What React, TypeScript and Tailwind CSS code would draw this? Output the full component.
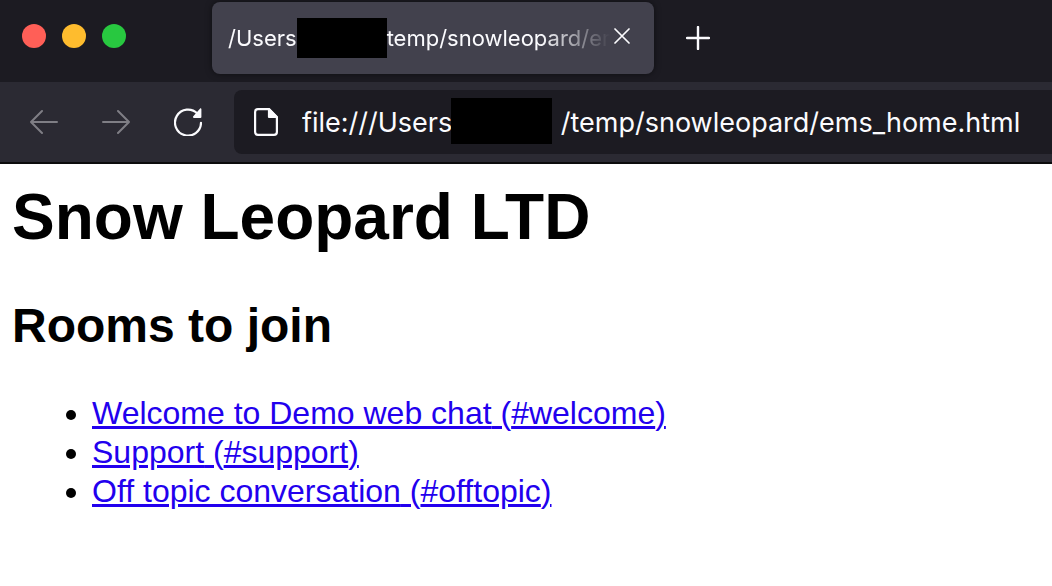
import React, { useState } from "react";

const rooms = [
  { name: "Welcome to Demo web chat", channel: "#welcome" },
  { name: "Support", channel: "#support" },
  { name: "Off topic conversation", channel: "#offtopic" },
];

const WindowButtons = () => (
  <div className="flex flex-row gap-4 pb-1">
    <button aria-label="Close window" className="w-6 h-6 rounded-full bg-[#ff5f57]" />
    <button aria-label="Minimize window" className="w-6 h-6 rounded-full bg-[#febc2e]" />
    <button aria-label="Zoom window" className="w-6 h-6 rounded-full bg-[#28c840]" />
  </div>
);

const Tab = () => (
  <div className="flex flex-row items-center w-[442px] h-[72px] pl-4 pr-5 rounded-lg bg-[#42414d] shadow-[0_0_6px_rgba(0,0,0,0.5)]">
    <div className="flex flex-row items-center flex-1 min-w-0 overflow-hidden text-[22px] leading-8 whitespace-nowrap [mask-image:linear-gradient(to_right,#000_82%,transparent)]">
      <span>/Users</span>
      <span className="w-[90px] h-10 shrink-0 bg-black" />
      <span>temp/snowleopard/ems_home.html</span>
    </div>
    <button aria-label="Close tab" className="flex items-center justify-center w-6 h-6 pb-1">
      <svg viewBox="0 0 16 16" className="w-4 h-4 shrink-0" fill="none" stroke="#fbfbfe" strokeWidth="1.7" strokeLinecap="round">
        <path d="M1 1l14 14M15 1L1 15" />
      </svg>
    </button>
  </div>
);

const TabBar = () => (
  <div className="flex flex-row items-center h-[82px] pl-[22px] pb-1.5 bg-[#1c1b22]">
    <WindowButtons />
    <div className="pl-[86px]">
      <Tab />
    </div>
    <button aria-label="New tab" className="ml-7 p-1">
      <svg viewBox="0 0 24 24" className="w-6 h-6" fill="none" stroke="#fbfbfe" strokeWidth="2.4" strokeLinecap="round">
        <path d="M12 1v22M1 12h22" />
      </svg>
    </button>
  </div>
);

const NavButtons = () => (
  <div className="flex flex-row gap-11">
    <button aria-label="Back" disabled>
      <svg viewBox="0 0 28 28" className="w-7 h-7" fill="none" stroke="#7f7e85" strokeWidth="2" strokeLinecap="round" strokeLinejoin="round">
        <path d="M27 14H1M12 3L1 14l11 11" />
      </svg>
    </button>
    <button aria-label="Forward" disabled>
      <svg viewBox="0 0 28 28" className="w-7 h-7" fill="none" stroke="#7f7e85" strokeWidth="2" strokeLinecap="round" strokeLinejoin="round">
        <path d="M1 14h26M16 3l11 11-11 11" />
      </svg>
    </button>
    <button aria-label="Reload">
      <svg viewBox="0 0 28 28" className="w-7 h-7" fill="none" stroke="#fbfbfe" strokeWidth="2.2" strokeLinecap="round">
        <path d="M27 14.8A13 13 0 1 1 23.4 5.6" />
        <path d="M27.4 1.2V9a1 1 0 0 1-1 1H20c-1 0-1.400-1-.7-1.700l6.600-7.600c.6-.6 1.500-.4 1.500.5z" fill="#fbfbfe" stroke="none" />
      </svg>
    </button>
  </div>
);

const AddressBar = () => {
  const [url, setUrl] = useState(
    "file:///Users/" + "\u00a0".repeat(13) + "/temp/snowleopard/ems_home.html"
  );
  return (
    <div className="flex flex-row items-center flex-1 min-w-0 h-16 pl-5 rounded-l-lg bg-[#1c1b22]">
      <svg viewBox="0 0 24 28" className="w-6 h-7 shrink-0" fill="none" stroke="#fbfbfe" strokeWidth="2.2" strokeLinejoin="round">
        <path d="M4 1.100h11l7.900 8V24a2.900 2.900 0 0 1-2.900 2.900H4A2.900 2.900 0 0 1 1.100 24V4A2.900 2.900 0 0 1 4 1.100z" />
        <path d="M15 1.200V9h7.500z" fill="#fbfbfe" />
      </svg>
      <div className="relative flex-1 min-w-0 ml-6">
        <input
          aria-label="Address"
          value={url}
          onChange={(e) => setUrl(e.target.value)}
          className="block w-full h-12 text-[27px] bg-transparent outline-none"
        />
        <div className="absolute top-0 left-[149px] w-[101px] h-[46px] bg-black" />
      </div>
    </div>
  );
};

const Toolbar = () => (
  <div className="flex flex-row items-center h-[82px] pl-[30px] border-b-2 border-[#0c0c0d] bg-[#2b2a33]">
    <NavButtons />
    <div className="flex flex-1 min-w-0 pl-8">
      <AddressBar />
    </div>
  </div>
);

const RoomList = () => (
  <ul className="pl-20 mt-10 list-disc text-[32px] leading-[39px]">
    {rooms.map((room) => (
      <li key={room.channel}>
        <a href={room.channel} className="text-[#2200ee] underline">
          {room.name} ({room.channel})
        </a>
      </li>
    ))}
  </ul>
);

export default function App() {
  return (
    <div className="min-h-screen bg-white">
      <header className="font-[Inter,sans-serif] text-[#fbfbfe]">
        <TabBar />
        <Toolbar />
      </header>
      <main className="px-3 pt-4 text-black font-['Liberation_Sans',Arial,sans-serif]">
        <h1 className="text-[64px] leading-[74px] font-bold">Snow Leopard LTD</h1>
        <h2 className="mt-11 text-[48px] leading-[56px] font-bold">Rooms to join</h2>
        <RoomList />
      </main>
    </div>
  );
}
